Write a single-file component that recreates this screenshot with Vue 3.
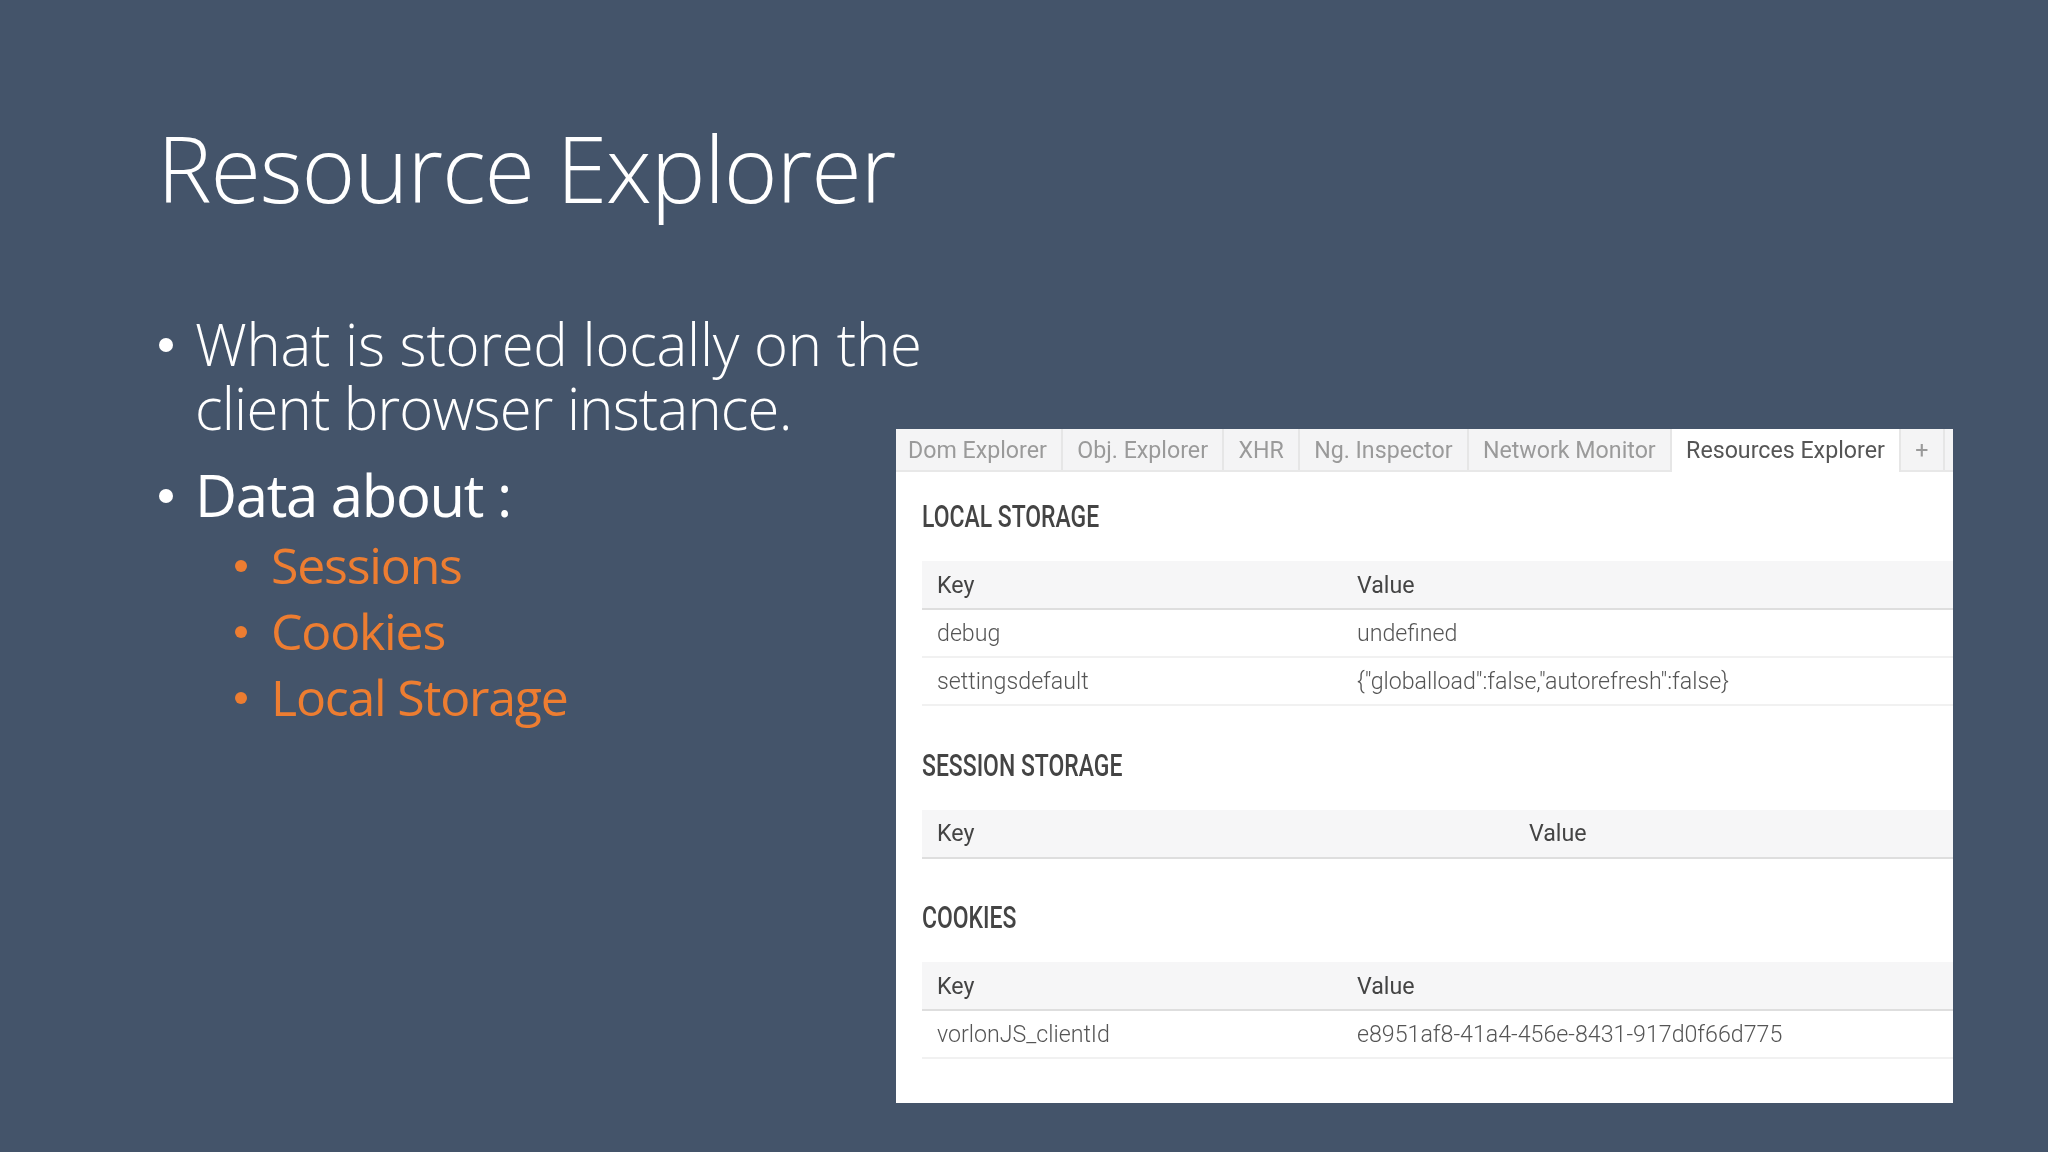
<template>
  <div class="slide">
    <h1 class="title">Resource Explorer</h1>
    <div class="content">
      <ul class="points">
        <li class="point light">
          <span class="dot"></span>
          <span>What is stored locally on the<br /><span class="tight">client browser instance.</span></span>
        </li>
        <li class="point lead">
          <span class="dot"></span>
          <span>Data about :</span>
        </li>
        <li v-for="item in topics" :key="item" class="topic">
          <span class="dot small"></span>
          <span>{{ item }}</span>
        </li>
      </ul>

      <div class="panel">
        <div class="tabs">
          <div
            v-for="tab in tabs"
            :key="tab"
            class="tab"
            :class="{ active: tab === 'Resources Explorer' }"
          >{{ tab }}</div>
          <div class="tab-rest"></div>
        </div>

        <section v-for="block in blocks" :key="block.title" class="block">
          <h3 class="block-title"><span>{{ block.title }}</span></h3>
          <table class="kv">
            <thead>
              <tr>
                <th :style="{ width: block.keyWidth + 'px' }">Key</th>
                <th>Value</th>
              </tr>
            </thead>
            <tbody>
              <tr v-for="row in block.rows" :key="row[0]">
                <td>{{ row[0] }}</td>
                <td>{{ row[1] }}</td>
              </tr>
            </tbody>
          </table>
        </section>
      </div>
    </div>
  </div>
</template>

<script setup>
const topics = ['Sessions', 'Cookies', 'Local Storage']

const tabs = [
  'Dom Explorer',
  'Obj. Explorer',
  'XHR',
  'Ng. Inspector',
  'Network Monitor',
  'Resources Explorer',
  '+'
]

const blocks = [
  {
    title: 'LOCAL STORAGE',
    keyWidth: 390,
    rows: [
      ['debug', 'undefined'],
      ['settingsdefault', '{"globalload":false,"autorefresh":false}']
    ]
  },
  { title: 'SESSION STORAGE', keyWidth: 562, rows: [] },
  {
    title: 'COOKIES',
    keyWidth: 390,
    rows: [['vorlonJS_clientId', 'e8951af8-41a4-456e-8431-917d0f66d775']]
  }
]
</script>

<style>
html,
body {
  margin: 0;
  background: #44546a;
}
</style>

<style scoped>
.slide {
  width: 2048px;
  height: 1152px;
  box-sizing: border-box;
  padding: 108px 95px 0 158px;
  background: #44546a;
  color: #fff;
  font-family: "Open Sans", sans-serif;
  overflow: hidden;
  filter: blur(0.4px);
}

.title {
  margin: 0 0 0 -1px;
  height: 120px;
  font-size: 92px;
  line-height: 120px;
  font-weight: 300;
  letter-spacing: -1.2px;
  white-space: nowrap;
}

.content {
  display: grid;
  grid-template-columns: 738px 1057px;
  margin-top: 84px;
}

.points {
  list-style: none;
  margin: 0;
  padding: 0;
  white-space: nowrap;
}

.point {
  display: flex;
  font-size: 58px;
  line-height: 64px;
  font-weight: 400;
}

.point.light {
  font-weight: 300;
  letter-spacing: -0.22px;
  margin-bottom: 23px;
}

.tight {
  letter-spacing: -0.8px;
}

.point.lead {
  letter-spacing: -1.3px;
  margin-bottom: 5px;
}

.topic {
  display: flex;
  margin-left: 77px;
  font-size: 50px;
  line-height: 66px;
  letter-spacing: -1.2px;
  color: #ed7d31;
}

.dot {
  flex: none;
  width: 14px;
  height: 14px;
  margin: 26px 22px 0 1px;
  border-radius: 50%;
  background: #fff;
}

.dot.small {
  width: 12px;
  height: 12px;
  margin: 28px 24px 0 0;
  background: #ed7d31;
}

.panel {
  margin-top: 117px;
  height: 674px;
  background: #fff;
  font-family: Roboto, sans-serif;
  overflow: hidden;
}

.tabs {
  display: flex;
  height: 41px;
  background: #f4f4f5;
  border-bottom: 2px solid #e8e8e8;
  box-sizing: content-box;
}

.tab {
  padding: 0 14.2px;
  font-size: 23.2px;
  line-height: 42px;
  color: #9a9a9a;
  border-right: 2px solid #e6e6e6;
  white-space: nowrap;
}

.tab:first-child {
  padding-left: 12px;
}

.tab.active {
  background: #fff;
  color: #555;
  margin-bottom: -2px;
  padding-bottom: 2px;
}

.tab-rest {
  flex: 1;
}

.block {
  margin: 42.5px 0 0 26px;
}

.block:first-of-type {
  margin-top: 28px;
}

.block-title {
  margin: 0 0 27px;
  height: 34px;
  font-size: 31px;
  line-height: 34px;
  font-weight: 500;
  color: #444;
  white-space: nowrap;
}

.block-title span {
  display: inline-block;
  transform: scaleX(0.74);
  transform-origin: left center;
}

.kv {
  width: 100%;
  border-collapse: collapse;
  table-layout: fixed;
  font-size: 23.2px;
}

.kv th {
  height: 47px;
  padding: 0 15px;
  text-align: left;
  font-weight: 400;
  color: #444;
  background: #f6f6f7;
  border-bottom: 2px solid #dedede;
}

.kv td {
  height: 46px;
  padding: 0 15px;
  font-weight: 300;
  color: #555;
  border-bottom: 2px solid #f1f1f1;
  white-space: nowrap;
}
</style>
